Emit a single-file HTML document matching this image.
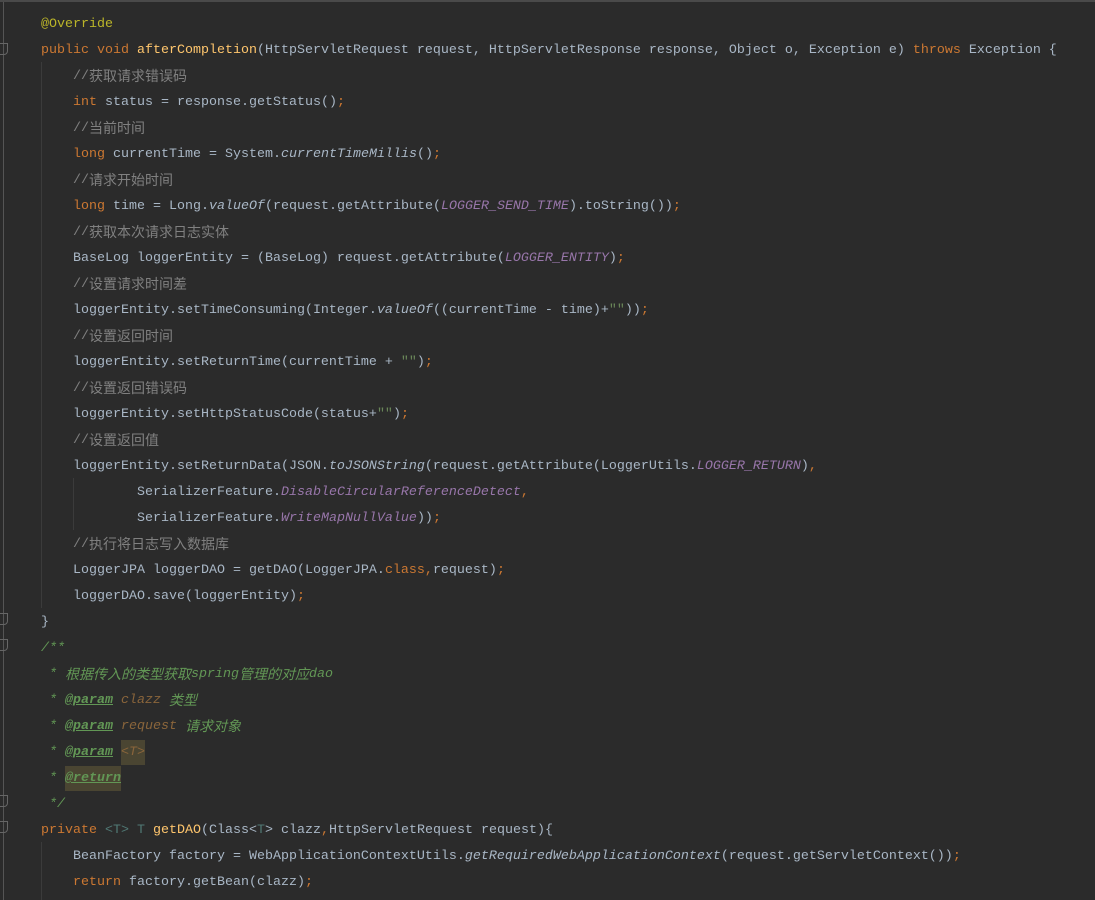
<!DOCTYPE html><html><head><meta charset="utf-8"><style>
body{margin:0;width:1095px;height:900px;background:#2b2b2b;overflow:hidden;position:relative;font-family:"Liberation Mono","Noto Sans CJK SC",monospace;font-size:13.33px;color:#a9b7c6}
.top{position:absolute;left:0;top:0;width:1095px;height:2px;background:#4a4a4a}
.g{position:absolute;left:3px;top:2px;width:1px;height:898px;background:#555}
.code{position:absolute;left:41px;top:12px}
.code div{height:26px;line-height:26px;white-space:pre;overflow:visible}
.k{color:#cc7832}.a{color:#bbb529}.m{color:#ffc66d}.c{color:#808080}.s{color:#6a8759}
.p{color:#9876aa;font-style:italic}.i{font-style:italic}.d{color:#629755;font-style:italic}
.t{color:#629755;font-weight:bold;text-decoration:underline}.n{color:#8a653b}.tp{color:#507874}
.cn{font-family:"Noto Sans CJK SC",sans-serif;font-size:14px;line-height:1;position:relative;top:2px}
.hl{background:#4a4532;display:inline-block;line-height:25px}
.ig{position:absolute;width:1px;background:#3b3b3b}
.f{position:absolute;left:0;width:7px;height:10px;border:1px solid #666;border-left:none;border-radius:0 0 4px 0}
</style></head><body>
<div class="top"></div><div class="g"></div>
<div class="ig" style="left:41px;top:62px;height:546px"></div>
<div class="ig" style="left:73px;top:478px;height:52px"></div>
<div class="ig" style="left:41px;top:842px;height:58px"></div>
<div class="f" style="top:43px"></div><div class="f" style="top:613px"></div><div class="f" style="top:639px"></div><div class="f" style="top:795px"></div><div class="f" style="top:821px"></div>
<div class="code">
<div><span class="a">@Override</span></div>
<div><span class="k">public void </span><span class="m">afterCompletion</span>(HttpServletRequest request, HttpServletResponse response, Object o, Exception e) <span class="k">throws </span>Exception {</div>
<div>    <span class="c">//<span class="cn">获取请求错误码</span></span></div>
<div>    <span class="k">int </span>status = response.getStatus()<span class="k">;</span></div>
<div>    <span class="c">//<span class="cn">当前时间</span></span></div>
<div>    <span class="k">long </span>currentTime = System.<span class="i">currentTimeMillis</span>()<span class="k">;</span></div>
<div>    <span class="c">//<span class="cn">请求开始时间</span></span></div>
<div>    <span class="k">long </span>time = Long.<span class="i">valueOf</span>(request.getAttribute(<span class="p">LOGGER_SEND_TIME</span>).toString())<span class="k">;</span></div>
<div>    <span class="c">//<span class="cn">获取本次请求日志实体</span></span></div>
<div>    BaseLog loggerEntity = (BaseLog) request.getAttribute(<span class="p">LOGGER_ENTITY</span>)<span class="k">;</span></div>
<div>    <span class="c">//<span class="cn">设置请求时间差</span></span></div>
<div>    loggerEntity.setTimeConsuming(Integer.<span class="i">valueOf</span>((currentTime - time)+<span class="s">""</span>))<span class="k">;</span></div>
<div>    <span class="c">//<span class="cn">设置返回时间</span></span></div>
<div>    loggerEntity.setReturnTime(currentTime + <span class="s">""</span>)<span class="k">;</span></div>
<div>    <span class="c">//<span class="cn">设置返回错误码</span></span></div>
<div>    loggerEntity.setHttpStatusCode(status+<span class="s">""</span>)<span class="k">;</span></div>
<div>    <span class="c">//<span class="cn">设置返回值</span></span></div>
<div>    loggerEntity.setReturnData(JSON.<span class="i">toJSONString</span>(request.getAttribute(LoggerUtils.<span class="p">LOGGER_RETURN</span>)<span class="k">,</span></div>
<div>            SerializerFeature.<span class="p">DisableCircularReferenceDetect</span><span class="k">,</span></div>
<div>            SerializerFeature.<span class="p">WriteMapNullValue</span>))<span class="k">;</span></div>
<div>    <span class="c">//<span class="cn">执行将日志写入数据库</span></span></div>
<div>    LoggerJPA loggerDAO = getDAO(LoggerJPA.<span class="k">class,</span>request)<span class="k">;</span></div>
<div>    loggerDAO.save(loggerEntity)<span class="k">;</span></div>
<div>}</div>
<div><span class="d">/**</span></div>
<div><span class="d"> * <span class="cn">根据传入的类型获取</span>spring<span class="cn">管理的对应</span>dao</span></div>
<div><span class="d"> * <span class="t">@param</span> <span class="n">clazz</span> <span class="cn">类型</span></span></div>
<div><span class="d"> * <span class="t">@param</span> <span class="n">request</span> <span class="cn">请求对象</span></span></div>
<div><span class="d"> * <span class="t">@param</span> <span class="n hl">&lt;T&gt;</span></span></div>
<div><span class="d"> * <span class="t hl">@return</span></span></div>
<div><span class="d"> */</span></div>
<div><span class="k">private </span><span class="tp">&lt;T&gt; T </span><span class="m">getDAO</span>(Class&lt;<span class="tp">T</span>&gt; clazz<span class="k">,</span>HttpServletRequest request){</div>
<div>    BeanFactory factory = WebApplicationContextUtils.<span class="i">getRequiredWebApplicationContext</span>(request.getServletContext())<span class="k">;</span></div>
<div>    <span class="k">return </span>factory.getBean(clazz)<span class="k">;</span></div>
</div>
</body></html>
